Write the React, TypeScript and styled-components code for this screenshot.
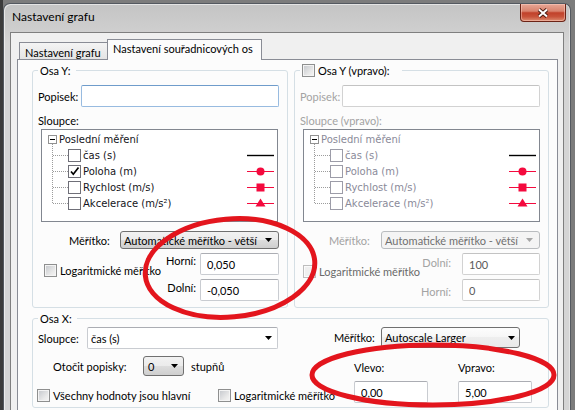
import React from 'react';
import styled, { createGlobalStyle, css } from 'styled-components';

const GlobalStyle = createGlobalStyle`
  html, body { margin: 0; padding: 0; background: #6a6a6a; }
  body {
    font-family: Lato, "Liberation Sans", Arial, sans-serif;
    font-size: 11px;
    color: #000;
  }
  *, *::before, *::after { box-sizing: border-box; }
`;

const RED = '#f40a3e';
const MUTED = '#a3a3a3';

type Variant = 'button' | 'light' | 'field' | 'disabled';

const Screen = styled.div`
  position: relative;
  width: 575px;
  height: 410px;
  overflow: hidden;
  background: linear-gradient(90deg, #3c3c3c 0 3px, #7c7c7c 3px);
`;

const Window = styled.div`
  margin: 3px 0 0 3px;
  width: 568px;
  height: 430px;
  border: 1px solid #545960;
  border-bottom: 0;
  border-radius: 7px 7px 0 0;
  background: linear-gradient(180deg, #c4c4c4 0, #cfcfcf 28px, #d5d5d5 40px);
  box-shadow: inset 1px 1px 0 rgba(255, 255, 255, 0.55), inset -1px 0 0 rgba(255, 255, 255, 0.4);
`;

const TitleBar = styled.div`
  display: flex;
  justify-content: space-between;
  align-items: flex-start;
  height: 28px;
  padding: 0 4px 0 8px;
`;

const Title = styled.span`
  padding-top: 5px;
  font-size: 12px;
  line-height: 16px;
`;

const CloseButton = styled.div`
  display: flex;
  align-items: center;
  justify-content: center;
  width: 46px;
  height: 18px;
  border: 1px solid #6b2316;
  border-top: 0;
  border-radius: 0 0 4px 4px;
  background: linear-gradient(180deg, #e8a796 0%, #d9836e 42%, #c1412a 52%, #c8533a 75%, #dd8c70 100%);
  box-shadow: inset 0 0 0 1px rgba(255, 215, 205, 0.45);
`;

const Client = styled.div`
  margin: 0 6px;
  height: 400px;
  padding: 6px 0 0 6px;
  border: 1px solid #7f7f7f;
  border-bottom: 0;
  background: #f0f0f0;
`;

const Tabs = styled.div`
  width: 541px;
`;

const TabStrip = styled.div`
  display: flex;
  align-items: flex-end;
  height: 20px;
  padding-left: 2px;
`;

const Tab = styled.div<{ $active?: boolean; $w: number }>`
  width: ${p => p.$w}px;
  height: 17px;
  padding: 2px 0 0 5px;
  border: 1px solid #898c95;
  border-bottom: 0;
  line-height: 15px;
  white-space: nowrap;
  background: linear-gradient(180deg, #f4f4f4, #e4e4e4);
  ${p =>
    p.$active &&
    css`
      position: relative;
      z-index: 1;
      height: 21px;
      margin: 0 0 -1px -1px;
      padding-top: 1px;
      background: #fcfcfc;
    `}
`;

const TabPanel = styled.div`
  height: 360px;
  padding: 3px 8px 0 14px;
  border: 1px solid #898c95;
  background: #fcfcfc;
`;

const GroupRow = styled.div`
  display: grid;
  grid-template-columns: 256px 255px;
  column-gap: 6px;
  margin-bottom: 3px;
`;

const Group = styled.fieldset`
  min-width: 0;
  margin: 0;
  padding: 0;
  border: 1px solid #d5dfe5;
  border-radius: 3px;
`;

const Legend = styled.legend<{ $padRight?: number }>`
  margin-left: 5px;
  padding: 0 ${p => p.$padRight ?? 5}px 0 2px;
  line-height: 15px;
`;

const LegendInner = styled.span`
  display: inline-flex;
  align-items: center;
  gap: 3px;
  vertical-align: top;
`;

const AxisBody = styled.div`
  padding: 0 8px 6px 5px;
`;

const FieldRow = styled.div<{ $top: number }>`
  display: flex;
  align-items: center;
  justify-content: space-between;
  margin-top: ${p => p.$top}px;
`;

const Label = styled.span<{ $muted?: boolean; $w?: number; $indent?: number }>`
  flex: none;
  line-height: 15px;
  white-space: nowrap;
  color: ${p => (p.$muted ? MUTED : '#000')};
  padding-left: ${p => p.$indent ?? 0}px;
  ${p =>
    p.$w !== undefined &&
    css`
      width: ${p.$w}px;
    `}
`;

const BlockLabel = styled.div<{ $muted?: boolean }>`
  margin-top: 6px;
  line-height: 15px;
  color: ${p => (p.$muted ? MUTED : '#000')};
`;

const TextBox = styled.input<{ $w: number; $focus?: boolean; $muted?: boolean }>`
  width: ${p => p.$w}px;
  height: 22px;
  margin: 0;
  padding: 0 0 0 6px;
  border: 1px solid #c9ccd1;
  border-top-color: #abadb3;
  border-radius: 2px;
  background: #fff;
  font: inherit;
  line-height: 15px;
  color: ${p => (p.$muted ? '#5a5a5a' : '#000')};
  outline: none;
  ${p =>
    p.$focus &&
    css`
      border-color: #98bbe0;
      border-top-color: #6f9ccb;
    `}
  ${p =>
    p.$muted &&
    css`
      border-color: #d2d2d2;
      border-top-color: #c3c3c3;
    `}
`;

const variants: Record<Variant, ReturnType<typeof css>> = {
  button: css`
    border: 1px solid #707070;
    background: linear-gradient(180deg, #f2f2f2 0%, #ebebeb 50%, #dddddd 50%, #cfcfcf 100%);
  `,
  light: css`
    border: 1px solid #707070;
    background: linear-gradient(180deg, #fdfdfd 0%, #f6f6f6 50%, #eeeeee 50%, #e9e9e9 100%);
  `,
  field: css`
    border: 1px solid #c9ccd1;
    border-top-color: #abadb3;
    border-radius: 2px;
    background: #fff;
  `,
  disabled: css`
    border: 1px solid #b9bcbf;
    background: #f4f4f4;
    color: #707070;
  `,
};

const Select = styled.div<{ $variant: Variant; $w: number; $h: number; $padL: number; $padR: number }>`
  flex: none;
  display: flex;
  align-items: center;
  justify-content: space-between;
  width: ${p => p.$w}px;
  height: ${p => p.$h}px;
  padding: 0 ${p => p.$padR}px 0 ${p => p.$padL}px;
  border-radius: 3px;
  line-height: 15px;
  white-space: nowrap;
  ${p => variants[p.$variant]}
`;

const ArrowWrap = styled.span<{ $muted?: boolean }>`
  display: flex;
  color: ${p => (p.$muted ? '#a5a5a5' : '#000')};
`;

const Tree = styled.div<{ $muted?: boolean }>`
  width: 237px;
  height: 93px;
  margin: 1px 0 0 3px;
  padding-top: 1px;
  border: 1px solid #828790;
  background: #fff;
  font-family: "DejaVu Sans", Verdana, sans-serif;
  font-size: 10px;
  color: ${p => (p.$muted ? '#8a8a99' : '#141420')};
`;

const TreeRow = styled.div<{ $child?: boolean }>`
  display: flex;
  align-items: center;
  height: 16px;
  padding-left: ${p => (p.$child ? 10 : 6)}px;
  padding-right: 3px;
  white-space: nowrap;
`;

const Expander = styled.span`
  flex: none;
  display: flex;
  align-items: center;
  justify-content: center;
  width: 9px;
  height: 9px;
  margin-right: 2px;
  border: 1px solid #919191;
  background: #fff;

  &::after {
    content: '';
    width: 5px;
    height: 1px;
    background: #000;
  }
`;

const Connector = styled.span<{ $last?: boolean }>`
  position: relative;
  flex: none;
  width: 16px;
  height: 16px;

  &::before {
    content: '';
    position: absolute;
    left: 0;
    top: -3px;
    bottom: ${p => (p.$last ? 8 : 0)}px;
    border-left: 1px dotted #9c9c9c;
  }

  &::after {
    content: '';
    position: absolute;
    left: 1px;
    right: 0;
    top: 8px;
    border-top: 1px dotted #9c9c9c;
  }
`;

const TreeCheck = styled.span<{ $muted?: boolean }>`
  flex: none;
  display: flex;
  align-items: center;
  justify-content: center;
  width: 13px;
  height: 13px;
  margin-right: 2px;
  border: 1px solid ${p => (p.$muted ? '#9c9ca8' : '#6f6f78')};
  background: #fff;
`;

const MarkerSlot = styled.span`
  display: flex;
  margin-left: auto;
`;

const LowerRow = styled.div`
  display: flex;
  align-items: flex-start;
  justify-content: space-between;
  margin-top: 4px;
`;

const CheckItem = styled.div<{ $muted?: boolean; $indent?: number; $top?: number; $w?: number }>`
  flex: none;
  display: flex;
  align-items: center;
  gap: 3px;
  margin: ${p => p.$top ?? 0}px 0 0 ${p => p.$indent ?? 0}px;
  line-height: 15px;
  white-space: nowrap;
  color: ${p => (p.$muted ? '#6a6a6a' : '#000')};
  ${p =>
    p.$w !== undefined &&
    css`
      width: ${p.$w}px;
    `}
`;

const Box = styled.span<{ $disabled?: boolean }>`
  flex: none;
  width: 13px;
  height: 13px;
  border: 1px solid ${p => (p.$disabled ? '#bdbdbd' : '#8e8f8f')};
  background: ${p =>
    p.$disabled ? '#efefef' : 'linear-gradient(135deg, #c3c6cb 0%, #e9e9e9 65%, #f6f6f6 100%)'};
  box-shadow: inset 0 0 0 1px ${p => (p.$disabled ? '#fafafa' : '#f4f4f4')};
`;

const LimitGrid = styled.div<{ $gap: number }>`
  display: grid;
  grid-template-columns: auto auto;
  column-gap: ${p => p.$gap}px;
  row-gap: 4px;
  justify-items: end;
`;

const LimitLabel = styled.span<{ $muted?: boolean; $top: number }>`
  padding-top: ${p => p.$top}px;
  line-height: 15px;
  color: ${p => (p.$muted ? MUTED : '#000')};
`;

const XBody = styled.div`
  display: grid;
  grid-template-columns: 301px 1fr;
  padding: 1px 0 4px;
`;

const Column = styled.div`
  display: flex;
  flex-direction: column;
`;

const Line = styled.div<{ $top?: number; $indent?: number }>`
  display: flex;
  align-items: center;
  margin-top: ${p => p.$top ?? 0}px;
  padding-left: ${p => p.$indent ?? 0}px;
  line-height: 15px;
  white-space: nowrap;
`;

const Unit = styled.span`
  margin-left: 7px;
`;

const BoundsGrid = styled.div`
  display: grid;
  grid-template-columns: 104px 104px;
  row-gap: 6px;
  margin-top: 12px;
  padding-left: 20px;
  line-height: 15px;
`;

const Annotations = styled.svg`
  position: absolute;
  left: 0;
  top: 0;
  pointer-events: none;
`;

type MarkerKind = 'line' | 'circle' | 'square' | 'triangle';

const columns: { name: React.ReactNode; marker: MarkerKind; checked?: boolean }[] = [
  { name: 'čas (s)', marker: 'line' },
  { name: 'Poloha (m)', marker: 'circle', checked: true },
  { name: 'Rychlost (m/s)', marker: 'square' },
  { name: 'Akcelerace (m/s²)', marker: 'triangle' },
];

function Arrow({ muted }: { muted?: boolean }) {
  return (
    <ArrowWrap $muted={muted}>
      <svg width="7" height="4" viewBox="0 0 7 4">
        <path d="M0 0h7L3.5 4z" fill="currentColor" />
      </svg>
    </ArrowWrap>
  );
}

function Marker({ kind }: { kind: MarkerKind }) {
  const color = kind === 'line' ? '#000' : RED;
  return (
    <svg width="27" height="11" viewBox="0 0 27 11">
      <line x1="0" y1="5.5" x2="27" y2="5.5" stroke={color} strokeWidth={kind === 'line' ? 1.4 : 1} />
      {kind === 'circle' && <circle cx="13.5" cy="5.5" r="4" fill={RED} />}
      {kind === 'square' && <rect x="9.5" y="1.5" width="8" height="8" fill={RED} />}
      {kind === 'triangle' && <polygon points="13.5,0.5 18.5,8.5 8.5,8.5" fill={RED} />}
    </svg>
  );
}

function CheckMark() {
  return (
    <svg width="11" height="11" viewBox="0 0 11 11">
      <path d="M2 5.5L4.3 8.2L9.5 1.5" fill="none" stroke="#000" strokeWidth="1.7" />
    </svg>
  );
}

function ColumnTree({ muted }: { muted?: boolean }) {
  return (
    <Tree $muted={muted}>
      <TreeRow>
        <Expander />
        Poslední měření
      </TreeRow>
      {columns.map((c, i) => (
        <TreeRow $child key={i}>
          <Connector $last={i === columns.length - 1} />
          <TreeCheck $muted={muted}>{c.checked && !muted && <CheckMark />}</TreeCheck>
          {c.name}
          <MarkerSlot>
            <Marker kind={c.marker} />
          </MarkerSlot>
        </TreeRow>
      ))}
    </Tree>
  );
}

function AxisGroup({ right }: { right?: boolean }) {
  const m = right;
  return (
    <Group>
      {right ? (
        <Legend $padRight={12}>
          <LegendInner>
            <Box />
            Osa Y (vpravo):
          </LegendInner>
        </Legend>
      ) : (
        <Legend>Osa Y:</Legend>
      )}
      <AxisBody>
        <FieldRow $top={7}>
          <Label $muted={m}>Popisek:</Label>
          <TextBox $w={198} $focus={!m} $muted={m} readOnly defaultValue="" />
        </FieldRow>
        <BlockLabel $muted={m}>{right ? 'Sloupce (vpravo):' : 'Sloupce:'}</BlockLabel>
        <ColumnTree muted={m} />
        <FieldRow $top={9}>
          <Label $muted={m} $indent={right ? 29 : 31}>
            Měřítko:
          </Label>
          <Select $variant={m ? 'disabled' : 'button'} $w={159} $h={18} $padL={3} $padR={6}>
            Automatické měřítko - větší
            <Arrow muted={m} />
          </Select>
        </FieldRow>
        <LowerRow>
          <CheckItem $muted={m} $indent={right ? 3 : 6} $top={right ? 11 : 10}>
            <Box $disabled={m} />
            Logaritmické měřítko
          </CheckItem>
          <LimitGrid $gap={right ? 11 : 4}>
            <LimitLabel $muted={m} $top={right ? 2 : 0}>
              {right ? 'Dolní:' : 'Horní:'}
            </LimitLabel>
            <TextBox $w={right ? 78 : 79} $muted={m} readOnly defaultValue={right ? '100' : '0,050'} />
            <LimitLabel $muted={m} $top={right ? 5 : 1}>
              {right ? 'Horní:' : 'Dolní:'}
            </LimitLabel>
            <TextBox $w={right ? 78 : 79} $muted={m} readOnly defaultValue={right ? '0' : '-0,050'} />
          </LimitGrid>
        </LowerRow>
      </AxisBody>
    </Group>
  );
}

function XAxisGroup() {
  return (
    <Group>
      <Legend>Osa X:</Legend>
      <XBody>
        <Column>
          <Line $indent={5}>
            <Label $w={49}>Sloupce:</Label>
            <Select $variant="field" $w={191} $h={22} $padL={3} $padR={5}>
              čas (s)
              <Arrow />
            </Select>
          </Line>
          <Line $top={7} $indent={20}>
            <Label $w={90}>Otočit popisky:</Label>
            <Select $variant="button" $w={41} $h={20} $padL={4} $padR={5}>
              0
              <Arrow />
            </Select>
            <Unit>stupňů</Unit>
          </Line>
          <Line $top={12} $indent={4}>
            <CheckItem $w={181}>
              <Box />
              Všechny hodnoty jsou hlavní
            </CheckItem>
            <CheckItem>
              <Box />
              Logaritmické měřítko
            </CheckItem>
          </Line>
        </Column>
        <Column>
          <Line>
            <Label $w={47}>Měřítko:</Label>
            <Select $variant="light" $w={139} $h={21} $padL={3} $padR={4}>
              Autoscale Larger
              <Arrow />
            </Select>
          </Line>
          <BoundsGrid>
            <span>Vlevo:</span>
            <span>Vpravo:</span>
            <TextBox $w={74} readOnly defaultValue="0,00" />
            <TextBox $w={74} readOnly defaultValue="5,00" />
          </BoundsGrid>
        </Column>
      </XBody>
    </Group>
  );
}

export default function App() {
  return (
    <>
      <GlobalStyle />
      <Screen>
        <Window>
          <TitleBar>
            <Title>Nastavení grafu</Title>
            <CloseButton>
              <svg width="12" height="10" viewBox="0 0 12 10">
                <path d="M2 1.5L10 8.5M10 1.5L2 8.5" stroke="#4a1a10" strokeWidth="3.8" />
                <path d="M2 1.5L10 8.5M10 1.5L2 8.5" stroke="#fff" strokeWidth="2" />
              </svg>
            </CloseButton>
          </TitleBar>
          <Client>
            <Tabs>
              <TabStrip>
                <Tab $w={89}>Nastavení grafu</Tab>
                <Tab $w={155} $active>
                  Nastavení souřadnicových os
                </Tab>
              </TabStrip>
              <TabPanel>
                <GroupRow>
                  <AxisGroup />
                  <AxisGroup right />
                </GroupRow>
                <XAxisGroup />
              </TabPanel>
            </Tabs>
          </Client>
        </Window>
        <Annotations width="575" height="410" viewBox="0 0 575 410">
          <ellipse
            cx="230"
            cy="268"
            rx="85"
            ry="49"
            transform="rotate(-5 230 268)"
            fill="none"
            stroke="#e3151d"
            strokeWidth="5"
          />
          <ellipse cx="433" cy="375" rx="121" ry="30" fill="none" stroke="#e3151d" strokeWidth="5" />
        </Annotations>
      </Screen>
    </>
  );
}
